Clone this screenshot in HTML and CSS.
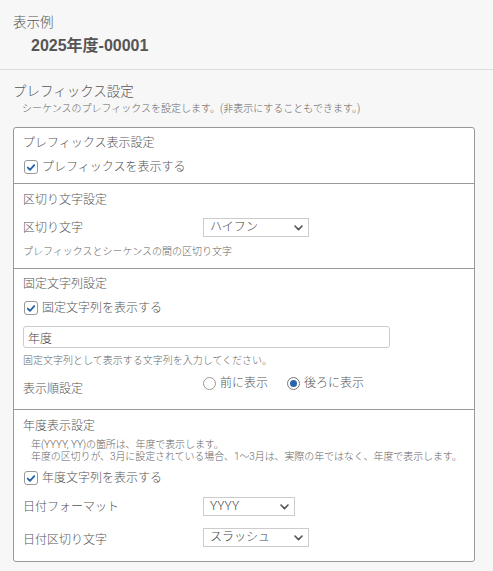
FILE: index.html
```html
<!DOCTYPE html>
<html lang="ja">
<head>
<meta charset="utf-8">
<title>プレフィックス設定</title>
<link rel="stylesheet" href="styles.css">
</head>
<body>
<div class="page">
  <section class="preview">
    <h2 class="preview-title">表示例</h2>
    <div class="preview-value">2025年度-00001</div>
  </section>

  <section class="settings">
    <h2 class="settings-title">プレフィックス設定</h2>
    <p class="settings-desc">シーケンスのプレフィックスを設定します。(非表示にすることもできます。)</p>

    <div class="panel">
      <div class="group group-1">
        <h3 class="group-title">プレフィックス表示設定</h3>
        <label class="check">
          <span class="check-box"><svg width="13" height="13" viewBox="0 0 13 13"><path d="M3 6.6 L5.4 9 L10 3.9" fill="none" stroke="#2864aa" stroke-width="2" stroke-linecap="round" stroke-linejoin="round"/></svg></span>
          <span class="check-text">プレフィックスを表示する</span>
        </label>
      </div>

      <div class="group group-2">
        <h3 class="group-title">区切り文字設定</h3>
        <div class="field field-sep">
          <span class="field-label">区切り文字</span>
          <span class="select-wrap">
            <select class="select"><option>ハイフン</option></select>
            <svg class="chev" width="9" height="6" viewBox="0 0 9 6"><path d="M1 1 L4.5 4.6 L8 1" fill="none" stroke="#555" stroke-width="1.6" stroke-linecap="round" stroke-linejoin="round"/></svg>
          </span>
        </div>
        <p class="help help-sep">プレフィックスとシーケンスの間の区切り文字</p>
      </div>

      <div class="group group-3">
        <h3 class="group-title">固定文字列設定</h3>
        <label class="check">
          <span class="check-box"><svg width="13" height="13" viewBox="0 0 13 13"><path d="M3 6.6 L5.4 9 L10 3.9" fill="none" stroke="#2864aa" stroke-width="2" stroke-linecap="round" stroke-linejoin="round"/></svg></span>
          <span class="check-text">固定文字列を表示する</span>
        </label>
        <input class="text-input" type="text" value="年度">
        <p class="help help-fixed">固定文字列として表示する文字列を入力してください。</p>
        <div class="field field-order">
          <span class="field-label">表示順設定</span>
          <span class="radios">
            <label class="radio-opt"><span class="radio"></span><span>前に表示</span></label>
            <label class="radio-opt"><span class="radio radio-on"></span><span>後ろに表示</span></label>
          </span>
        </div>
      </div>

      <div class="group group-4">
        <h3 class="group-title">年度表示設定</h3>
        <p class="help help-year">年(YYYY, YY)の箇所は、年度で表示します。<br>年度の区切りが、3月に設定されている場合、1〜3月は、実際の年ではなく、年度で表示します。</p>
        <label class="check check-year">
          <span class="check-box"><svg width="13" height="13" viewBox="0 0 13 13"><path d="M3 6.6 L5.4 9 L10 3.9" fill="none" stroke="#2864aa" stroke-width="2" stroke-linecap="round" stroke-linejoin="round"/></svg></span>
          <span class="check-text">年度文字列を表示する</span>
        </label>
        <div class="field field-format">
          <span class="field-label">日付フォーマット</span>
          <span class="select-wrap">
            <select class="select select-narrow"><option>YYYY</option></select>
            <svg class="chev" width="9" height="6" viewBox="0 0 9 6"><path d="M1 1 L4.5 4.6 L8 1" fill="none" stroke="#555" stroke-width="1.6" stroke-linecap="round" stroke-linejoin="round"/></svg>
          </span>
        </div>
        <div class="field field-datesep">
          <span class="field-label">日付区切り文字</span>
          <span class="select-wrap">
            <select class="select"><option>スラッシュ</option></select>
            <svg class="chev" width="9" height="6" viewBox="0 0 9 6"><path d="M1 1 L4.5 4.6 L8 1" fill="none" stroke="#555" stroke-width="1.6" stroke-linecap="round" stroke-linejoin="round"/></svg>
          </span>
        </div>
      </div>
    </div>
  </section>
</div>
</body>
</html>
```

FILE: styles.css
```css
* { box-sizing: border-box; }

html, body {
  margin: 0;
  padding: 0;
  background: #f7f7f7;
}

body {
  font-family: "Roboto", "Noto Sans CJK JP", sans-serif;
  font-weight: 300;
  color: #555;
  font-size: 12px;
}

h2, h3, p { margin: 0; font-weight: 300; }

.preview {
  padding: 12px 13px 12px;
  border-bottom: 1px solid #dcdcdc;
}

.preview-title {
  font-size: 13.5px;
  line-height: 20px;
  color: #555;
}

.preview-value {
  margin: 3px 0 0 18px;
  font-family: "Liberation Sans", "Noto Sans CJK JP", sans-serif;
  font-size: 16px;
  line-height: 22px;
  font-weight: bold;
  color: #555;
}

.settings {
  padding: 11px 18px 0 13px;
}

.settings-title {
  font-size: 13.5px;
  line-height: 20px;
  color: #555;
}

.settings-desc {
  margin-left: 9px;
  font-size: 10px;
  line-height: 16px;
  color: #666;
}

.panel {
  margin-top: 10px;
  background: #fff;
  border: 1px solid #999;
  border-radius: 3px;
}

.group {
  padding: 6px 9px 7px;
}

.group + .group {
  border-top: 1px solid #999;
}

.group-2 { padding: 7px 9px 9px; }
.group-3 { padding: 6px 9px 11px; }
.group-4 { padding: 7px 9px 12px; }

.group-title {
  font-size: 12px;
  line-height: 18px;
  color: #555;
}

.check {
  margin-top: 6px;
  display: flex;
  align-items: center;
  gap: 4px;
  height: 18px;
  line-height: 18px;
  font-size: 12px;
  color: #555;
}

.check-box {
  width: 14px;
  height: 14px;
  border: 1px solid #999;
  border-radius: 3px;
  background: #fff;
  display: flex;
  align-items: center;
  justify-content: center;
  margin-left: 1px;
}

.check-year { margin-top: 6px; }

.field {
  display: grid;
  grid-template-columns: 180px auto;
  align-items: start;
}

.field-label {
  font-size: 12px;
  line-height: 18px;
  color: #555;
}

.field-sep { margin-top: 9px; }
.field-sep .field-label { padding-top: 1px; }

.field-order { margin-top: 6px; }
.field-order .field-label { padding-top: 6px; }

.field-format { margin-top: 10px; }
.field-format .field-label { padding-top: 1px; }

.field-datesep { margin-top: 12px; }
.field-datesep .field-label { padding-top: 3px; }

.select-wrap {
  position: relative;
  display: inline-block;
  width: max-content;
}

.select {
  appearance: none;
  -webkit-appearance: none;
  display: block;
  width: 106px;
  height: 19px;
  margin: 0;
  padding: 0 6px;
  border: 1px solid #ccc;
  border-radius: 0;
  background: #fff;
  font-family: "Roboto", "Noto Sans CJK JP", sans-serif;
  font-weight: 300;
  font-size: 12px;
  line-height: 17px;
  color: #444;
}

.select-narrow { width: 92px; }

.chev {
  position: absolute;
  right: 6px;
  top: 7px;
}

.help {
  font-size: 10px;
  line-height: 14px;
  color: #666;
}

.help-sep { margin-top: 8px; }
.help-fixed { margin-top: 6px; }

.help-year {
  margin-top: 4px;
  padding-left: 8px;
  line-height: 12px;
  white-space: nowrap;
  letter-spacing: -0.1px;
}

.text-input {
  display: block;
  margin-top: 9px;
  width: 367px;
  height: 22px;
  padding: 0 4px;
  border: 1px solid #ccc;
  border-radius: 3px;
  background: #fff;
  font-family: "Roboto", "Noto Sans CJK JP", sans-serif;
  font-weight: 300;
  font-size: 12px;
  color: #444;
}

.radios {
  display: flex;
  align-items: center;
  gap: 19px;
  height: 18px;
}

.radio-opt {
  display: flex;
  align-items: center;
  gap: 4px;
  font-size: 12px;
  line-height: 18px;
  color: #555;
}

.radio {
  width: 13px;
  height: 13px;
  border: 1px solid #999;
  border-radius: 50%;
  background: #fff;
  display: flex;
  align-items: center;
  justify-content: center;
}

.radio-on {
  border-color: #777;
}

.radio-on::after {
  content: "";
  width: 7px;
  height: 7px;
  border-radius: 50%;
  background: #2864aa;
}
```
